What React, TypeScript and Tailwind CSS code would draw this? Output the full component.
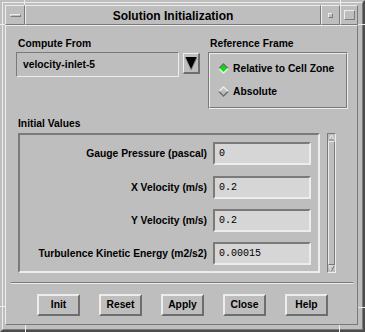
import React from "react";

// shadow styles, Motif look
const raised1 =
  "border border-t-[#ececec] border-l-[#ececec] border-r-[#7a7a7a] border-b-[#7a7a7a]";
const raised2 =
  "border-2 border-t-[#ececec] border-l-[#ececec] border-r-[#6e6e6e] border-b-[#6e6e6e]";
const sunken1 =
  "border border-t-[#7a7a7a] border-l-[#7a7a7a] border-r-[#ececec] border-b-[#ececec]";
const sunken2 =
  "border-2 border-t-[#7a7a7a] border-l-[#7a7a7a] border-r-[#ececec] border-b-[#ececec]";
const label = "text-[10.3px] leading-[12px] font-bold whitespace-nowrap";

const fields = [
  { name: "Gauge Pressure (pascal)", value: "0", mt: "mt-0" },
  { name: "X Velocity (m/s)", value: "0.2", mt: "mt-[11px]" },
  { name: "Y Velocity (m/s)", value: "0.2", mt: "mt-[10px]" },
  { name: "Turbulence Kinetic Energy (m2/s2)", value: "0.00015", mt: "mt-[10px]" },
];

const buttons = ["Init", "Reset", "Apply", "Close", "Help"];

const Diamond = ({ on }: { on: boolean }) => (
  <svg width="11" height="11" viewBox="0 0 11 11" className="shrink-0">
    <polygon points="0,5.5 5.5,0 11,5.5" fill={on ? "#6e6e6e" : "#ececec"} />
    <polygon points="0,5.5 5.5,11 11,5.5" fill={on ? "#ececec" : "#6e6e6e"} />
    <polygon points="2,5.5 5.5,2 9,5.5 5.5,9" fill={on ? "#00e600" : "#bebebe"} />
  </svg>
);

const Tick = ({ className }: { className: string }) => (
  <div className={"absolute bg-[#ececec] " + className} />
);

const App = () => {
  return (
    <div className="w-[365px] h-[332px] relative bg-[#bebebe] text-black font-['Liberation_Sans',Arial,sans-serif] border-2 border-t-[#bebebe] border-l-[#bebebe] border-r-[#4d4d4d] border-b-[#4d4d4d]">
      <div className="h-full flex flex-col border border-t-[#ececec] border-l-[#ececec] border-r-[#7a7a7a] border-b-[#7a7a7a] pl-[2px] pt-[2px] pr-[4px] pb-[4px]">
        {/* title bar */}
        <div className="h-[20px] flex shrink-0">
          <div className={"w-[20px] flex items-center justify-center " + raised1}>
            <div className={"w-[11px] h-[3px] " + raised1} />
          </div>
          <div className={"flex-1 flex items-center justify-center pt-[1px] " + raised1}>
            <span className="text-[12px] leading-none font-bold">Solution Initialization</span>
          </div>
          <div className={"w-[19px] flex items-center justify-center " + raised1}>
            <div className={"w-[5px] h-[5px] " + raised1} />
          </div>
          <div className={"w-[18px] flex items-center justify-center " + raised1}>
            <div className={"w-[11px] h-[10px] " + raised1} />
          </div>
        </div>

        {/* client area */}
        <div className={"flex-1 flex flex-col " + raised1}>
          <div className="flex pt-[12px] pl-[10px]">
            <div className="w-[184px] flex flex-col">
              <div className={label + " pl-[2px]"}>Compute From</div>
              <div className="flex mt-[2px]">
                <div className={"w-[163px] h-[25px] flex items-center pl-[6px] " + sunken1}>
                  <span className={label}>velocity-inlet-5</span>
                </div>
                <div className="ml-[4px] mt-[1px] w-[17px] h-[21px] flex items-center justify-center border-t border-l border-r-2 border-b-2 border-t-[#ececec] border-l-[#ececec] border-r-[#6e6e6e] border-b-[#6e6e6e]">
                  <svg width="12" height="13" viewBox="0 0 12 13">
                    <polygon points="0,0 12,0 6,13" fill="#000" />
                    <polyline points="12,0 6,13" stroke="#6e6e6e" strokeWidth="1" fill="none" />
                    <polyline points="0,0 6,13" stroke="#9a9a9a" strokeWidth="1" fill="none" />
                  </svg>
                </div>
              </div>
            </div>
            <div className="ml-[8px] w-[140px] flex flex-col">
              <div className={label + " pl-[2px]"}>Reference Frame</div>
              <div className={"mt-[2px] h-[57px] " + sunken1}>
                <div className={"h-full flex flex-col gap-[4px] pt-[5px] pl-[8px] " + raised1}>
                  <div className="h-[19px] flex items-center gap-[4px]">
                    <Diamond on />
                    <span className={label}>Relative to Cell Zone</span>
                  </div>
                  <div className="h-[19px] flex items-center gap-[4px]">
                    <Diamond on={false} />
                    <span className={label}>Absolute</span>
                  </div>
                </div>
              </div>
            </div>
          </div>

          <div className={label + " mt-[9px] pl-[12px]"}>Initial Values</div>
          <div className="flex mt-[3px] ml-[12px]">
            <div className={"w-[302px] h-[140px] flex flex-col pt-[7px] pr-[7px] " + sunken2}>
              {fields.map((f) => (
                <div key={f.name} className={"flex items-center justify-end " + f.mt}>
                  <span className={label + " mr-[6px]"}>{f.name}</span>
                  <div
                    className={
                      "w-[98px] h-[23px] flex items-center pl-[4px] bg-[#d6d6d6] font-['Liberation_Mono',monospace] text-[10px] " +
                      sunken2
                    }
                  >
                    {f.value}
                  </div>
                </div>
              ))}
            </div>
            <div className={"ml-[7px] w-[9px] h-[140px] flex flex-col " + sunken1}>
              <svg width="7" height="7" viewBox="0 0 7 7" className="shrink-0">
                <polygon points="3.5,1 6,6 1,6" fill="#bebebe" stroke="#ececec" strokeWidth="1" />
                <polyline points="6,6 1,6" stroke="#6e6e6e" strokeWidth="1" />
              </svg>
              <div className={"flex-1 " + raised1} />
              <svg width="7" height="7" viewBox="0 0 7 7" className="shrink-0">
                <polygon points="1,1 6,1 3.5,6" fill="#bebebe" stroke="#ececec" strokeWidth="1" />
                <polyline points="6,1 3.5,6" stroke="#6e6e6e" strokeWidth="1" />
              </svg>
            </div>
          </div>

          <div className="mt-[9px] ml-[5px] mr-[4px] h-[2px] border-t border-b border-t-[#7a7a7a] border-b-[#ececec]" />

          <div className="flex gap-[19px] mt-[10px] pl-[31px]">
            {buttons.map((b) => (
              <div
                key={b}
                className={"w-[43px] h-[22px] flex items-center justify-center " + raised2}
              >
                <span className={label}>{b}</span>
              </div>
            ))}
          </div>
        </div>
      </div>

      {/* resize corner marks on the frame */}
      <Tick className="left-[22px] top-[-2px] w-[1px] h-[5px]" />
      <Tick className="left-[338px] top-[-2px] w-[1px] h-[5px]" />
      <Tick className="left-[23px] top-[323px] w-[1px] h-[7px]" />
      <Tick className="left-[337px] top-[323px] w-[1px] h-[7px]" />
      <Tick className="left-[-2px] top-[22px] w-[5px] h-[1px]" />
      <Tick className="left-[-2px] top-[304px] w-[5px] h-[1px]" />
      <Tick className="left-[356px] top-[22px] w-[7px] h-[1px]" />
      <Tick className="left-[356px] top-[305px] w-[7px] h-[1px]" />
    </div>
  );
};

export default App;
